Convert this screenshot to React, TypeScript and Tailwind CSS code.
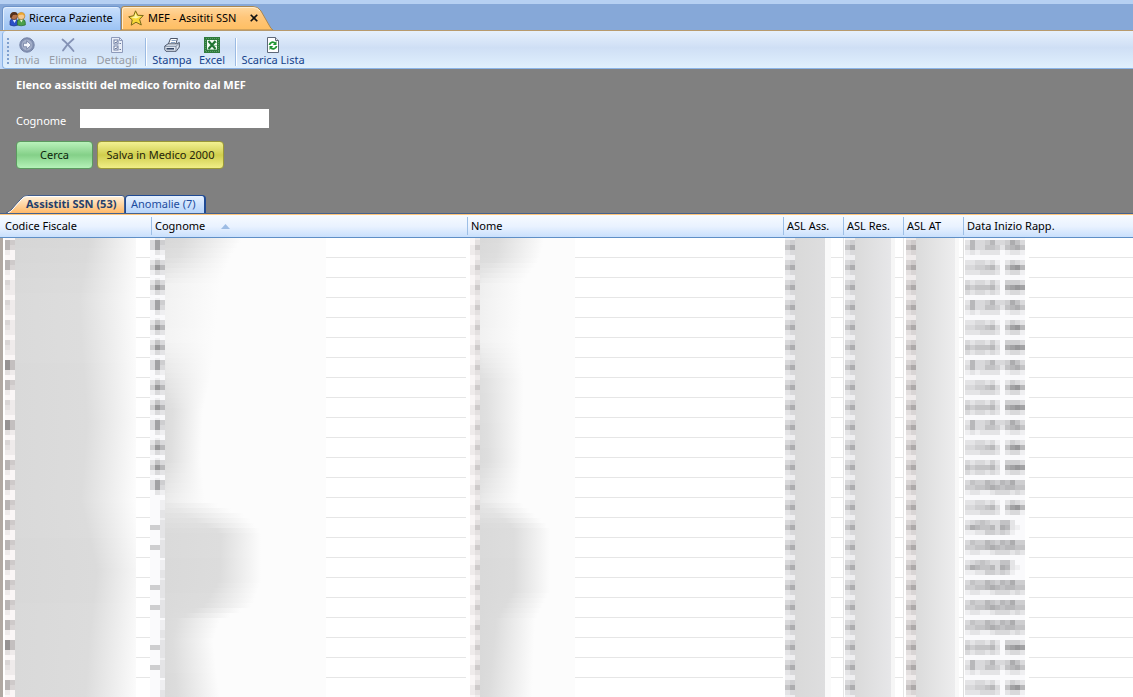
import React from 'react';

interface ToolItem {
  label: string;
  icon: React.ReactNode;
  disabled?: boolean;
  width: string;
}

interface Fade {
  shade: number;
  solid: number;
  end: number;
}

const PeopleIcon = () => (
  <svg width="17" height="16" viewBox="0 0 17 16" className="shrink-0">
    <path d="M1 14V10.5Q1 8 4 8H7Q9 8.5 9 11V14Q5 16 1 14Z" fill="#2a50c8" stroke="#1c348e" strokeWidth=".7" />
    <path d="M3.5 8.5L5.5 12L7.5 8.5Z" fill="#dfe9fc" />
    <circle cx="5" cy="5" r="3.6" fill="#b5714a" stroke="#51301c" strokeWidth=".6" />
    <path d="M1.2 6.5C.3-.4 9-.4 8.900 4.500L6.800 3.800L4 4L2.600 6.800Z" fill="#53301d" />
    <path d="M8.300 14V11Q8.500 8.300 11 8.200H13.500Q16.300 8.800 16.300 11.500V14Q12 15.600 8.300 14Z" fill="#4aa04a" stroke="#23692c" strokeWidth=".7" />
    <path d="M10.800 8.500L12.300 11.500L14 8.500Z" fill="#eef6d8" />
    <circle cx="12.300" cy="5" r="3.600" fill="#f6c88e" stroke="#9c6820" strokeWidth=".6" />
    <path d="M8.700 5C8.600 .2 16 .2 15.900 5.400L13.500 3.400L10.500 3.900Z" fill="#e9a52f" />
  </svg>
);

const StarIcon = () => (
  <svg width="16" height="16" viewBox="0 0 16 16" className="shrink-0">
    <path d="M7.500 .8L9.800 5.300L15.300 5.500L11.600 9.300L13.300 15L8 12.200L3.200 15.200L4.200 9.800L.7 6.800L5.700 5.700Z" fill="#f8d838" stroke="#7a6a1c" strokeLinejoin="round" />
    <path d="M7.500 2.800L8.900 6.300L12.800 6.400L8 8.500L2.800 7.200L6.500 6.500Z" fill="#fdf6a8" />
  </svg>
);

const SendIcon = () => (
  <svg width="16" height="16" viewBox="0 0 16 16">
    <circle cx="8" cy="8" r="7.200" fill="#8391b2" stroke="#7482a5" />
    <circle cx="8" cy="8" r="5.400" fill="#a5b0ca" />
    <path d="M4.500 6.300H7.700V3.800L12.200 8L7.700 12.200V9.700H4.500Z" fill="#f4f7fd" stroke="#65749a" strokeWidth=".7" />
  </svg>
);

const DeleteIcon = () => (
  <svg width="16" height="16" viewBox="0 0 16 16">
    <path d="M2.500 2.500Q7 6 13.500 14M13.500 2Q7 7 3 13.500" fill="none" stroke="#8492b5" strokeWidth="1.800" strokeLinecap="round" />
  </svg>
);

const DetailsIcon = () => (
  <svg width="16" height="16" viewBox="0 0 16 16">
    <path d="M2.500 .5H10.500L13.500 3.500V15.500H2.500Z" fill="#e9eef8" stroke="#8d9aba" />
    <path d="M10.500 .5V3.500H13.500" fill="none" stroke="#8d9aba" />
    <rect x="5" y="3" width="4" height="4" fill="#fff" stroke="#6c7ba0" />
    <rect x="5" y="9" width="4" height="4" fill="#fff" stroke="#6c7ba0" />
    <path d="M6 5L7 6L8.500 4M6 11L7 12L8.500 10M10.500 6.500H12M10.500 12.500H12" stroke="#6c7ba0" fill="none" />
  </svg>
);

const PrinterIcon = () => (
  <svg width="16" height="16" viewBox="0 0 16 16">
    <path d="M6.500 1.500H13.500L11.500 8H4Z" fill="#fff" stroke="#4a5568" />
    <path d="M7.500 3.500H11.800M6.800 5.500H11" stroke="#8aa3c4" />
    <path d="M.8 9L4 6.800H12.500L15.300 5.500V10L12.200 14.300H2L.8 12.800Z" fill="#dfe7f2" stroke="#3f4b5e" strokeWidth=".9" />
    <path d="M1 9.300H12L15 6.500M12 9.300V14" fill="none" stroke="#66758d" strokeWidth=".8" />
    <path d="M2.500 11.800H10" stroke="#1f3354" strokeWidth="1.400" />
  </svg>
);

const ExcelIcon = () => (
  <svg width="16" height="16" viewBox="0 0 16 16" shapeRendering="crispEdges">
    <rect width="16" height="16" fill="#2e7b3c" />
    <rect x="1.500" y="1.500" width="13" height="13" fill="none" stroke="#5b9d67" strokeDasharray="1 1" />
    <rect x="3" y="3" width="10" height="10" fill="#f4fbf4" />
    <path d="M10 5.500H13M10 8.500H13M3 12.500H13" stroke="#9dc9a5" />
    <path d="M4.500 4L11.500 12M11.500 4L4.500 12" fill="none" stroke="#1f7431" strokeWidth="2.200" shapeRendering="auto" />
  </svg>
);

const DownloadListIcon = () => (
  <svg width="16" height="16" viewBox="0 0 16 16">
    <path d="M2.500 .5H10.500L13.500 3.500V15.500H2.500Z" fill="#fff" stroke="#5e6878" />
    <path d="M10.500 .5V3.500H13.500" fill="#dfe5ee" stroke="#5e6878" />
    <path d="M4.500 8C4.700 5 8.500 4.300 10 6.300" fill="none" stroke="#1f9431" strokeWidth="1.800" />
    <path d="M11.500 4V8H7.800Z" fill="#1f9431" />
    <path d="M11.500 9C11.200 12 7.500 12.700 6 10.700" fill="none" stroke="#1f9431" strokeWidth="1.800" />
    <path d="M4.500 13V9H8.200Z" fill="#1f9431" />
  </svg>
);

const GROUPS: ToolItem[][] = [
  [
    { label: 'Invia', icon: <SendIcon />, disabled: true, width: 'w-8' },
    { label: 'Elimina', icon: <DeleteIcon />, disabled: true, width: 'w-[50px]' },
    { label: 'Dettagli', icon: <DetailsIcon />, disabled: true, width: 'w-12' },
  ],
  [
    { label: 'Stampa', icon: <PrinterIcon />, width: 'w-[42px]' },
    { label: 'Excel', icon: <ExcelIcon />, width: 'w-[38px]' },
  ],
  [{ label: 'Scarica Lista', icon: <DownloadListIcon />, width: 'w-16' }],
];

const ToolButton: React.FC<{ item: ToolItem }> = ({ item }) => (
  <button
    type="button"
    disabled={item.disabled}
    className={`flex flex-col items-center whitespace-nowrap leading-[14px] ${item.width} ${
      item.disabled ? 'text-[#969ba5]' : 'text-[#15428b]'
    }`}
  >
    {item.icon}
    <span>{item.label}</span>
  </button>
);

// Vertical steps of one row, in pixels
const STEPS = [2, 5, 5, 5, 3];
const ROW_COUNT = 23;

// Darkness of each cell, one hex digit per block, one string per step
const CODE_DARK = ['00', '64', '63', '10', '00'];
const CODE_LIGHT = ['00', '31', '21', '11', '00'];
const CODE_BROWN = ['00', '95', '95', '21', '00'];
const NAME_DARK = ['010', '253', '496', '132', '000'];
const NAME_MID = ['010', '384', '383', '021', '000'];
const NAME_DASH = ['001', '002', '442', '002', '002'];
const NAME_NONE = ['000', '001', '001', '002', '002'];
const SHORT_MARK = ['01', '02', '14', '12', '01'];
const ASL_MARK = ['11', '34', '57', '23', '11'];

const DATE_A = ['000000000000', '323324204443', '545556307898', '323323202332', '000000000000'];
const DATE_B = ['000000000000', '263346334753', '363355425675', '121222201221', '000000000000'];
const DATE_C = ['000000000000', '223323102432', '334456305896', '222333202331', '000000000000'];
const DATE_D = ['000000000000', '354465465744', '445567656655', '122112333232', '000000000000'];
const DATE_E = ['000000000000', '234543355200', '476556376210', '112244343100', '000000000000'];
const DATES = [
  DATE_B, DATE_C, DATE_A, DATE_B, DATE_C, DATE_A, DATE_B, DATE_C, DATE_A, DATE_B, DATE_C, DATE_A,
  DATE_D, DATE_C, DATE_E, DATE_D, DATE_E, DATE_D, DATE_D, DATE_D, DATE_A, DATE_B, DATE_C,
];

const codeMark = (row: number) => {
  if (row === 6 || row === 9 || row === 20) return CODE_BROWN;
  if ([2, 3, 4, 5, 8, 10, 21].includes(row)) return CODE_LIGHT;
  return CODE_DARK;
};

const nameMark = (row: number) => {
  if (row > 12) return [14, 15, 17, 18, 20, 21].includes(row) ? NAME_DASH : NAME_NONE;
  return row % 3 === 0 ? NAME_MID : NAME_DARK;
};

const Mosaic: React.FC<{ rows: string[]; warm?: boolean }> = ({ rows, warm }) => (
  <svg width={rows[0].length * 5} height="20" shapeRendering="crispEdges" className="block shrink-0" aria-hidden="true">
    {rows.map((line, r) => {
      const y = STEPS.slice(0, r).reduce((a, b) => a + b, 0);
      return line.split('').map((ch, c) => {
        const v = 250 - parseInt(ch, 16) * 11;
        const fill = warm ? `rgb(${v},${v - 4},${v - 4})` : `rgb(${v},${v},${v + 2})`;
        return <rect key={`${r}-${c}`} x={c * 5} y={y} width="5" height={STEPS[r]} fill={fill} />;
      });
    })}
  </svg>
);

// Smudge lengths at a few row positions, interpolated in between
const COGNOME_FADE: [number, Fade][] = [
  [0, { shade: 216, solid: 18, end: 76 }],
  [0.8, { shade: 220, solid: 14, end: 66 }],
  [2.2, { shade: 238, solid: 0, end: 55 }],
  [5, { shade: 240, solid: 0, end: 50 }],
  [7, { shade: 226, solid: 2, end: 45 }],
  [8.5, { shade: 220, solid: 8, end: 38 }],
  [11, { shade: 220, solid: 6, end: 36 }],
  [13, { shade: 232, solid: 2, end: 40 }],
  [13.8, { shade: 225, solid: 22, end: 82 }],
  [14.6, { shade: 218, solid: 56, end: 96 }],
  [17, { shade: 217, solid: 54, end: 96 }],
  [18.2, { shade: 218, solid: 40, end: 88 }],
  [19, { shade: 218, solid: 12, end: 55 }],
  [20, { shade: 218, solid: 8, end: 48 }],
  [23, { shade: 217, solid: 12, end: 55 }],
];

const NOME_FADE: [number, Fade][] = [
  [0, { shade: 217, solid: 18, end: 64 }],
  [0.9, { shade: 219, solid: 16, end: 60 }],
  [2.2, { shade: 236, solid: 0, end: 42 }],
  [5, { shade: 238, solid: 0, end: 40 }],
  [7, { shade: 222, solid: 6, end: 44 }],
  [11, { shade: 219, solid: 8, end: 42 }],
  [13, { shade: 230, solid: 2, end: 38 }],
  [14.4, { shade: 218, solid: 34, end: 70 }],
  [17.5, { shade: 217, solid: 34, end: 70 }],
  [19, { shade: 217, solid: 16, end: 55 }],
  [23, { shade: 217, solid: 8, end: 52 }],
];

const CODICE_FADE: [number, Fade][] = [
  [0, { shade: 214, solid: 74, end: 126 }],
  [3, { shade: 218, solid: 64, end: 122 }],
  [9, { shade: 217, solid: 72, end: 124 }],
  [13, { shade: 217, solid: 66, end: 120 }],
  [16.5, { shade: 216, solid: 82, end: 130 }],
  [20, { shade: 217, solid: 74, end: 125 }],
  [23, { shade: 217, solid: 70, end: 122 }],
];

const fadeAt = (stops: [number, Fade][], pos: number): Fade => {
  const next = stops.findIndex(([p]) => p >= pos);
  if (next <= 0) return stops[0][1];
  const [p0, a] = stops[next - 1];
  const [p1, b] = stops[next];
  const t = (pos - p0) / (p1 - p0);
  return {
    shade: a.shade + (b.shade - a.shade) * t,
    solid: a.solid + (b.solid - a.solid) * t,
    end: a.end + (b.end - a.end) * t,
  };
};

const Smudge: React.FC<{ stops: [number, Fade][]; row: number; className: string }> = ({ stops, row, className }) => (
  <div className={`shrink-0 h-5 ${className}`}>
    {[0, 1, 2, 3].map((i) => {
      const { shade, solid, end } = fadeAt(stops, row + i / 4);
      const c = Math.round(shade);
      return (
        <div
          key={i}
          className="h-[5px]"
          style={{
            background: `linear-gradient(to right, rgb(${c},${c},${c}), rgb(${c + 3},${c + 3},${c + 3}) ${solid}px, #fcfcfc ${end}px)`,
          }}
        />
      );
    })}
  </div>
);

const Cell: React.FC<{ children: React.ReactNode; inset?: string }> = ({ children, inset = '' }) => (
  <td className="p-0">
    <div className={`flex h-5 ${inset}`}>
      {children}
      <div className="flex-1 border-b border-[#e6e6e6]" />
    </div>
  </td>
);

const COLUMNS = ['Codice Fiscale', 'Cognome', 'Nome', 'ASL Ass.', 'ASL Res.', 'ASL AT', 'Data Inizio Rapp.'];

const PatientTable = () => (
  <table className="w-full table-fixed border-separate border-spacing-0">
    <colgroup>
      <col className="w-[150px]" />
      <col className="w-[316px]" />
      <col className="w-[317px]" />
      <col className="w-[60px]" />
      <col className="w-[60px]" />
      <col className="w-[60px]" />
      <col />
    </colgroup>
    <thead>
      <tr className="bg-linear-to-b from-[#f7fbff] via-[#e9f2ff] to-[#c6defc]">
        {COLUMNS.map((name, i) => (
          <th key={name} scope="col" className="p-0 h-[23px] border-b border-[#5f8fc6] text-left font-normal">
            <div
              className={`flex items-center h-[18px] whitespace-nowrap text-black ${
                i === 0 ? 'pl-[5px]' : 'pl-[3px] border-l border-[#9dbfe6]'
              } ${i === 1 || i === 2 ? 'ml-px' : ''}`}
            >
              {name}
              {name === 'Cognome' && (
                <svg width="9" height="5" viewBox="0 0 9 5" className="ml-4" aria-hidden="true">
                  <path d="M4.500 0L9 5H0Z" fill="#9dbce4" />
                </svg>
              )}
            </div>
          </th>
        ))}
      </tr>
    </thead>
    <tbody>
      {Array.from({ length: ROW_COUNT }, (_, row) => (
        <tr key={row}>
          <Cell inset="border-l-3 border-[#b0a8a2] pl-0.5">
            <Mosaic rows={codeMark(row)} warm />
            <Smudge stops={CODICE_FADE} row={row} className="w-[121px]" />
          </Cell>
          <Cell>
            <Mosaic rows={nameMark(row)} />
            <Smudge stops={COGNOME_FADE} row={row} className="w-[161px]" />
          </Cell>
          <Cell inset="pl-1">
            <Mosaic rows={SHORT_MARK} warm />
            <Smudge stops={NOME_FADE} row={row} className="w-[95px]" />
          </Cell>
          <Cell inset="pl-0.5">
            <Mosaic rows={ASL_MARK} />
            <div className="w-[30px] bg-linear-to-r from-[#d9d9d9] to-[#dededf]" />
            <div className="w-1.5 bg-[#fafafa]" />
          </Cell>
          <Cell inset="pl-px border-l border-[#e6e6e6]">
            <Mosaic rows={ASL_MARK} />
            <div className="w-9 bg-linear-to-r from-[#dadada] to-[#e7e7e9]" />
            <div className="w-1 bg-[#f6f6f6]" />
          </Cell>
          <Cell inset="pl-0.5 border-l border-[#e6e6e6]">
            <Mosaic rows={ASL_MARK} warm />
            <div className="w-[39px] bg-linear-to-r from-[#dbdbdb] to-[#ededee]" />
            <div className="w-1 bg-[#f8f8f8]" />
          </Cell>
          <Cell inset="pl-px border-l border-[#dedede]">
            <Mosaic rows={DATES[row]} />
            <div className="w-1" />
          </Cell>
        </tr>
      ))}
    </tbody>
  </table>
);

const WindowTabs = () => (
  <div className="flex items-end h-[30px] shrink-0 pl-0.5 border-t-4 border-[#b6d0f2] bg-[#86a8d8]" role="tablist">
    <button
      type="button"
      role="tab"
      aria-selected={false}
      className="flex items-center gap-[3px] w-[119px] h-6 pl-1.5 rounded-t border border-b-0 border-[#6e94c9] bg-linear-to-b from-[#c9dffb] to-[#9cc3f4] shadow-[inset_1px_1px_0_#e2effe] whitespace-nowrap"
    >
      <PeopleIcon />
      Ricerca Paziente
    </button>
    <div className="relative flex items-center w-[152px] h-6 pl-[7px]">
      <svg className="absolute inset-0 w-full h-full" viewBox="0 0 152 24" preserveAspectRatio="none" aria-hidden="true">
        <defs>
          <linearGradient id="active-tab" x1="0" y1="0" x2="0" y2="1">
            <stop offset="0" stopColor="#ffd9a0" />
            <stop offset=".45" stopColor="#ffc67a" />
            <stop offset="1" stopColor="#ffbf62" />
          </linearGradient>
        </defs>
        <path d="M.5 24V3Q.5 .5 3 .5H132Q137 .5 140 5L148 19Q150 23 152 24Z" fill="url(#active-tab)" stroke="#a98752" />
        <path d="M1.500 23V4Q1.500 1.500 4 1.500H132Q136 1.500 139 5" fill="none" stroke="#ffeccb" />
      </svg>
      <button type="button" role="tab" aria-selected className="relative flex items-center gap-1 whitespace-nowrap">
        <StarIcon />
        MEF - Assititi SSN
      </button>
      <button type="button" aria-label="Chiudi" className="relative ml-3.5">
        <svg width="8" height="8" viewBox="0 0 8 8">
          <path d="M.7 .7L7.300 7.300M7.300 .7L.7 7.300" stroke="#111" strokeWidth="1.600" />
        </svg>
      </button>
    </div>
  </div>
);

const Toolbar = () => (
  <div className="h-[39px] shrink-0 pl-0.5 bg-[#c3daf9] border-t border-[#b89a6c]">
    <div
      role="toolbar"
      className="flex h-[38px] items-center pl-1 pt-1 border-l border-b border-[#8bb4e6] rounded-l bg-linear-to-b from-[#e6f0fc] via-[#cfdff5] via-45% to-[#e0f0fd]"
    >
      <div className="h-[27px] w-0.5 bg-[repeating-linear-gradient(#7e9fce_0_2px,transparent_2px_4px)]" />
      {GROUPS.map((group, i) => (
        <React.Fragment key={i}>
          {i > 0 && <div className="w-px h-7 bg-[#9bbbe3] border-r border-white box-content" />}
          <div className={`flex ${i === 0 ? 'pl-0.5 pr-1' : 'px-1'}`}>
            {group.map((item) => (
              <ToolButton key={item.label} item={item} />
            ))}
          </div>
        </React.Fragment>
      ))}
    </div>
  </div>
);

const SearchPanel = () => (
  <form className="px-4 pt-2" onSubmit={(e) => e.preventDefault()}>
    <h1 className="font-bold leading-4 text-white">Elenco assistiti del medico fornito dal MEF</h1>
    <div className="flex items-start gap-2.5 pt-4">
      <label htmlFor="cognome" className="w-[54px] pt-1 leading-4 text-white">
        Cognome
      </label>
      <input id="cognome" type="text" className="w-[189px] h-[19px] px-1 bg-white text-black outline-none" />
    </div>
    <div className="flex gap-1 pt-3">
      <button
        type="submit"
        className="w-[77px] h-7 rounded border border-[#5b9a5f] bg-linear-to-b from-[#b9f2bb] via-[#84d088] to-[#b4f2b8] text-[#0b240c]"
      >
        Cerca
      </button>
      <button
        type="button"
        className="w-[127px] h-7 rounded border border-[#9a9836] bg-linear-to-b from-[#f3f191] via-[#d0ce4c] to-[#f0ee86] text-[#24240b] whitespace-nowrap"
      >
        Salva in Medico 2000
      </button>
    </div>
  </form>
);

const ListTabs = () => (
  <div className="flex items-end pl-1 border-b border-[#44628f]" role="tablist">
    <button type="button" role="tab" aria-selected className="relative w-[121px] h-[18px] pl-[22px] text-left font-bold text-[#253f6b] whitespace-nowrap">
      <svg className="absolute inset-0 w-full h-full" viewBox="0 0 122 18" preserveAspectRatio="none" aria-hidden="true">
        <defs>
          <linearGradient id="list-tab" x1="0" y1="0" x2="0" y2="1">
            <stop offset="0" stopColor="#fff3df" />
            <stop offset="1" stopColor="#ffb968" />
          </linearGradient>
        </defs>
        <path d="M2 18Q6 17 9 13L17 4Q20 .5 24 .5H119Q121.500 .5 121.500 3V18Z" fill="url(#list-tab)" />
        <path d="M2 18Q6 17 9 13L17 4Q20 .5 24 .5H119Q121.500 .5 121.500 3V18" fill="none" stroke="#3f5c8c" />
        <path d="M4 18Q8 16 10 13L18 4Q20 1.500 24 1.500H119" fill="none" stroke="#fff" />
      </svg>
      <span className="relative">Assistiti SSN (53)</span>
    </button>
    <button
      type="button"
      role="tab"
      aria-selected={false}
      className="w-[81px] h-[18px] pl-[5px] text-left rounded-t-sm border border-b-0 border-r-2 border-[#1f4a94] bg-linear-to-b from-[#e6f1ff] to-[#b6d4fa] text-[#1d4c9e] whitespace-nowrap"
    >
      Anomalie (7)
    </button>
  </div>
);

export default function App() {
  return (
    <div className="flex flex-col h-screen overflow-hidden bg-white text-[11px] text-black font-['Noto_Sans','Open_Sans',sans-serif]">
      <WindowTabs />
      <Toolbar />
      <div className="flex flex-col justify-between h-[145px] shrink-0 bg-[#808080]">
        <SearchPanel />
        <ListTabs />
      </div>
      <div className="flex-1 min-h-0 overflow-hidden border-t border-[#ffc67a]">
        <PatientTable />
      </div>
    </div>
  );
}
